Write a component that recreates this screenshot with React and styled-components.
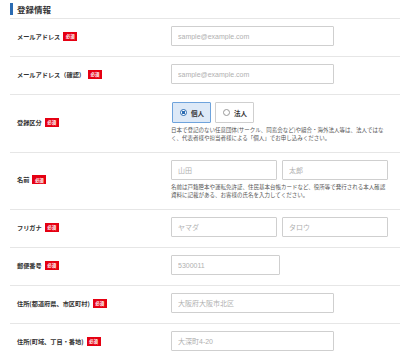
import React from 'react'
import styled, { createGlobalStyle } from 'styled-components'

const rows = [
  { label: 'メールアドレス', type: 'single', width: 75, placeholder: 'sample@example.com' },
  { label: 'メールアドレス（確認）', type: 'single', width: 75, placeholder: 'sample@example.com' },
  { label: '登録区分', type: 'radio' },
  {
    label: '名前',
    type: 'pair',
    placeholders: ['山田', '太郎'],
    note: '名前は戸籍謄本や運転免許証、住民基本台帳カードなど、役所等で発行される本人確認資料に記載がある、お客様の氏名を入力してください。',
  },
  { label: 'フリガナ', type: 'pair', placeholders: ['ヤマダ', 'タロウ'] },
  { label: '郵便番号', type: 'single', width: 50, placeholder: '5300011' },
  { label: '住所(都道府県、市区町村)', type: 'single', width: 75, placeholder: '大阪府大阪市北区' },
  { label: '住所(町域、丁目・番地)', type: 'single', width: 75, placeholder: '大深町4-20' },
]

function Field({ row }) {
  if (row.type === 'radio') {
    return (
      <>
        <RadioGroup>
          <RadioBox selected>
            <RadioMark selected />
            個人
          </RadioBox>
          <RadioBox>
            <RadioMark />
            法人
          </RadioBox>
        </RadioGroup>
        <Note>
          日本で登記のない任意団体(サークル、同窓会など)や組合・海外法人等は、法人ではなく、代表者様や担当者様による「個人」でお申し込みください。
        </Note>
      </>
    )
  }
  if (row.type === 'pair') {
    return (
      <>
        <PairRow>
          {row.placeholders.map((p) => (
            <TextInput key={p} placeholder={p} />
          ))}
        </PairRow>
        {row.note && <Note>{row.note}</Note>}
      </>
    )
  }
  return <TextInput placeholder={row.placeholder} $width={row.width} />
}

export default function App() {
  return (
    <>
      <GlobalStyle />
      <Page>
        <Heading>登録情報</Heading>
        {rows.map((row) => (
          <Row key={row.label}>
            <Label>
              {row.label}
              <Badge>必須</Badge>
            </Label>
            <FieldCol>
              <Field row={row} />
            </FieldCol>
          </Row>
        ))}
      </Page>
    </>
  )
}

// #region styles
const GlobalStyle = createGlobalStyle`
  body {
    margin: 0;
    background: #fff;
    font-family: "Liberation Sans", "Noto Sans CJK JP", sans-serif;
    color: #333;
  }
`

const Page = styled.div`
  width: 400px;
  padding-left: 10px;
  box-sizing: border-box;
  overflow: hidden;
`

const Heading = styled.h2`
  margin: 0;
  height: 18px;
  display: flex;
  align-items: center;
  gap: 4px;
  font-size: 8.5px;
  font-weight: bold;
  color: #333;
  font-family: "Noto Sans CJK JP", sans-serif;
  border-bottom: 1px solid #e6e6e6;

  &::before {
    content: '';
    width: 3px;
    height: 12px;
    background: #2b6cb3;
  }
`

const Row = styled.div`
  display: grid;
  grid-template-columns: 161px 217px;
  padding: 7px 12px 10px 0;
  border-bottom: 1px solid #e6e6e6;
`

const Label = styled.div`
  display: flex;
  align-items: center;
  gap: 3px;
  padding-left: 7px;
  font-family: "Noto Sans CJK JP", sans-serif;
  font-size: 6.2px;
  font-weight: bold;
  color: #333;
`

const Badge = styled.span`
  display: inline-flex;
  align-items: center;
  justify-content: center;
  width: 14px;
  height: 9px;
  background: #e50012;
  color: #fff;
  font-size: 4.5px;
  font-weight: bold;
`

const FieldCol = styled.div`
  display: flex;
  flex-direction: column;
`

const TextInput = styled.input`
  box-sizing: border-box;
  width: ${(p) => (p.$width ? `${p.$width}%` : '100%')};
  height: 20px;
  margin: 0;
  padding: 0 6px;
  border: 1px solid #cfcfcf;
  border-radius: 1px;
  font-family: "Liberation Sans", "Noto Sans CJK JP", sans-serif;
  font-size: 7px;
  color: #333;
  min-width: 0;

  &::placeholder {
    color: #b0b0b0;
  }
`

const PairRow = styled.div`
  display: grid;
  grid-template-columns: 1fr 1fr;
  gap: 5px;
`

const RadioGroup = styled.div`
  display: flex;
  gap: 4px;
  padding-left: 1px;
`

const RadioBox = styled.label`
  box-sizing: border-box;
  display: flex;
  align-items: center;
  gap: 4px;
  width: 39px;
  height: 21px;
  padding-left: 7px;
  border: 1px solid ${(p) => (p.selected ? '#6ea3dc' : '#cfcfcf')};
  background: ${(p) => (p.selected ? '#dde9f7' : '#fff')};
  border-radius: 1px;
  font-family: "Noto Sans CJK JP", sans-serif;
  font-size: 6.5px;
  font-weight: bold;
  color: #333;
`

const RadioMark = styled.span`
  box-sizing: border-box;
  width: 7px;
  height: 7px;
  border-radius: 50%;
  border: 1px solid ${(p) => (p.selected ? '#2b6cb3' : '#999')};
  background: ${(p) => (p.selected ? 'radial-gradient(circle, #2b6cb3 0 45%, #fff 50%)' : '#fff')};
`

const Note = styled.p`
  margin: 4px 0 0;
  font-family: "Noto Sans CJK JP", sans-serif;
  font-size: 5.5px;
  line-height: 7.5px;
  color: #555;
`
// #endregion
